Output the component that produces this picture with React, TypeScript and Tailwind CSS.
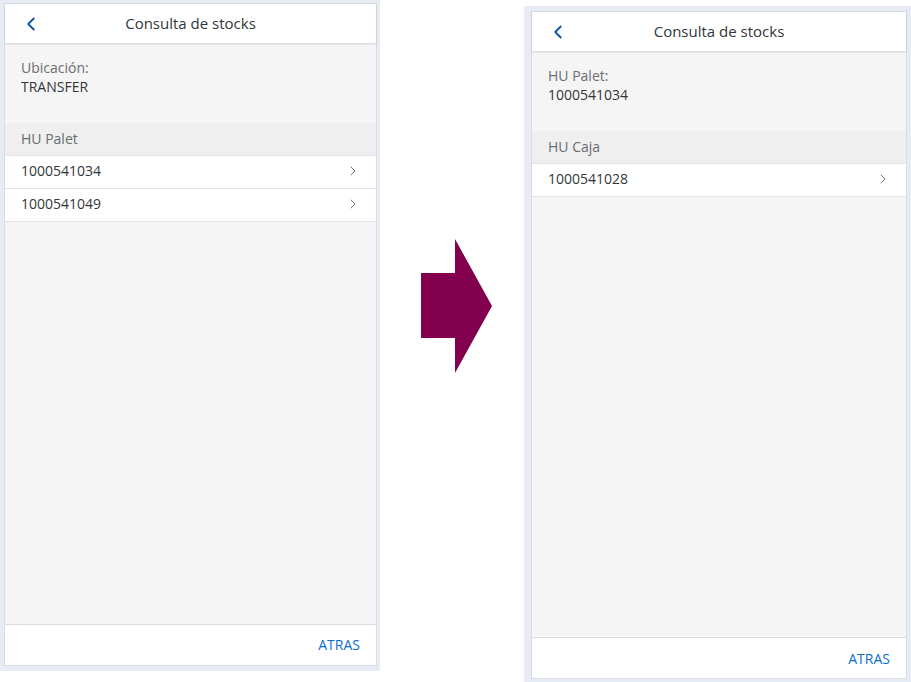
import { ChevronLeft, ChevronRight } from 'lucide-react';

interface ScreenProps {
  labelTitle: string;
  labelValue: string;
  sectionTitle: string;
  rows: string[];
  footerClass: string;
}

function StockScreen({ labelTitle, labelValue, sectionTitle, rows, footerClass }: ScreenProps) {
  return (
    <div className="flex h-full flex-col border border-[#d9dde3] bg-[#f5f5f5]">
      <div className="relative flex h-[39px] shrink-0 items-center justify-center bg-white shadow-[0_1px_2px_rgba(0,0,0,0.15)]">
        <ChevronLeft className="absolute left-[15px] h-[22px] w-[22px] text-[#0854a0]" strokeWidth={2} />
        <span className="pb-[1px] text-[15px] text-[#32363a]">Consulta de stocks</span>
      </div>

      <div className="px-4 pt-[15px] pb-[27px] text-[14px] leading-[19px]">
        <div className="text-[#6a6d70]">{labelTitle}</div>
        <div className="text-[#32363a]">{labelValue}</div>
      </div>

      <div className="flex h-[33px] items-center border-b border-[#e5e5e5] bg-[#efefef] px-4 pb-[2px] text-[14px] text-[#6a6d70]">
        {sectionTitle}
      </div>

      {rows.map((row) => (
        <div
          key={row}
          className="flex h-[33px] items-center justify-between border-b border-[#e5e5e5] bg-white pr-[15px] pb-[3px] pl-4 text-[14px] text-[#32363a]"
        >
          <span>{row}</span>
          <ChevronRight className="h-[16px] w-[16px] text-[#6a6d70]" strokeWidth={1.4} />
        </div>
      ))}

      <div className="flex-1" />

      <div className={`flex shrink-0 items-center justify-end border-t border-[#dcdcdc] bg-white pr-4 ${footerClass}`}>
        <span className="text-[14px] text-[#0a6ed1]">ATRAS</span>
      </div>
    </div>
  );
}

export default function App() {
  return (
    <div className="flex h-[682px] w-[911px] items-start bg-white font-['Open_Sans','Noto_Sans',sans-serif]">
      <div className="h-[671px] w-[380px] shrink-0 bg-[#e7ecf4] pt-[3px] pr-[3px] pb-[5px] pl-[4px]">
        <StockScreen
          labelTitle="Ubicación:"
          labelValue="TRANSFER"
          sectionTitle="HU Palet"
          rows={['1000541034', '1000541049']}
          footerClass="h-[41px] pb-[1px]"
        />
      </div>

      <div className="flex h-full w-[144px] shrink-0 items-start">
        <svg width="144" height="400" viewBox="0 0 144 400" className="block">
          <polygon points="41,273 75,273 75,239 112,306 75,373 75,338 41,338" fill="#82004d" />
        </svg>
      </div>

      <div className="mt-[6px] h-[676px] w-[387px] shrink-0 bg-[#e7ecf4] pt-[5px] pr-[4px] pb-[3px] pl-[7px]">
        <StockScreen
          labelTitle="HU Palet:"
          labelValue="1000541034"
          sectionTitle="HU Caja"
          rows={['1000541028']}
          footerClass="h-[41px]"
        />
      </div>
    </div>
  );
}
